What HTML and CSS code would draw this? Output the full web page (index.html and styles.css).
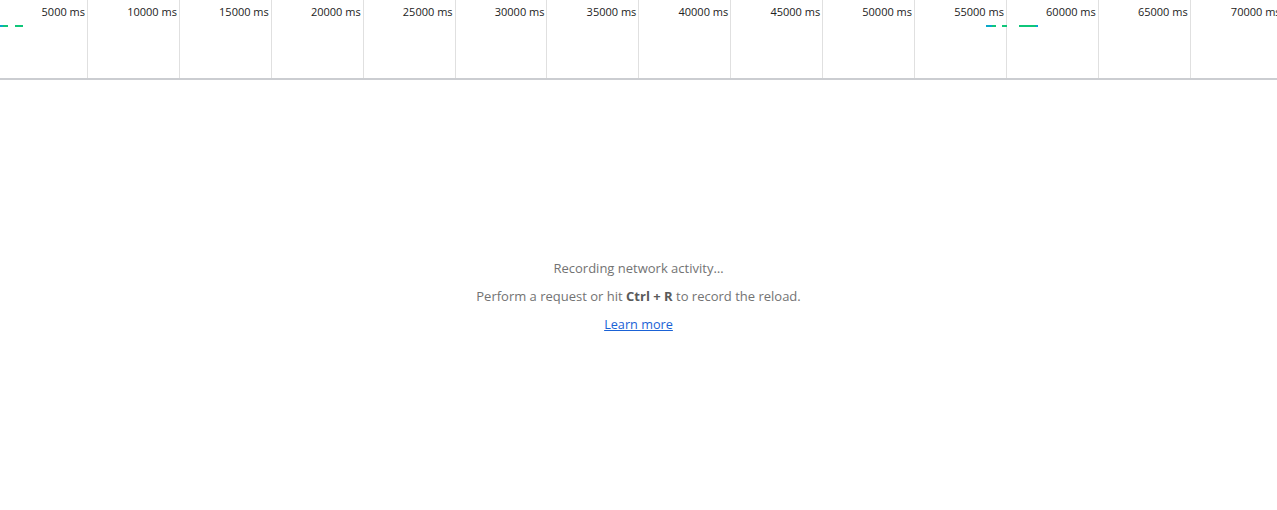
FILE: index.html
```html
<!DOCTYPE html>
<html>
<head>
<meta charset="utf-8">
<link rel="stylesheet" href="styles.css">
</head>
<body>
<div class="overview">
  <div class="ticks">
    <div class="tick"><span>5000 ms</span></div>
    <div class="tick"><span>10000 ms</span></div>
    <div class="tick"><span>15000 ms</span></div>
    <div class="tick"><span>20000 ms</span></div>
    <div class="tick"><span>25000 ms</span></div>
    <div class="tick"><span>30000 ms</span></div>
    <div class="tick"><span>35000 ms</span></div>
    <div class="tick"><span>40000 ms</span></div>
    <div class="tick"><span>45000 ms</span></div>
    <div class="tick"><span>50000 ms</span></div>
    <div class="tick"><span>55000 ms</span></div>
    <div class="tick"><span>60000 ms</span></div>
    <div class="tick"><span>65000 ms</span></div>
    <div class="tick"><span>70000 ms</span></div>
  </div>
  <div class="bar" style="left:0;width:8px"><i style="width:3px"></i></div>
  <div class="bar" style="left:15px;width:8px"></div>
  <div class="bar" style="left:986px;width:10px"><i style="width:6px"></i></div>
  <div class="bar" style="left:1002px;width:5px"></div>
  <div class="bar" style="left:1019px;width:19px"><b style="width:2px"></b></div>
</div>
<div class="empty">
  <div class="msg">Recording network activity…</div>
  <div class="msg">Perform a request or hit <strong>Ctrl + R</strong> to record the reload.</div>
  <a class="link" href="#">Learn more</a>
</div>
</body>
</html>
```
FILE: styles.css
```css
html, body { margin: 0; padding: 0; background: #fff; }
body { width: 1277px; height: 510px; overflow: hidden; font-family: "Open Sans", "Noto Sans", sans-serif; }
.overview { position: relative; height: 78px; border-bottom: 2px solid #cbcdd1; overflow: hidden; }
.ticks { display: flex; height: 78px; margin-left: -3.9px; }
.tick { flex: 0 0 91.9px; box-sizing: border-box; border-right: 1px solid #e0e0e0; text-align: right; padding: 4px 2px 0 0; font-size: 11px; color: #222; white-space: nowrap; letter-spacing: 0; }
.tick:last-child { border-right: none; }
.bar { position: absolute; top: 25px; height: 2px; background: #0fc67a; display: flex; justify-content: space-between; }
.bar i { display: block; height: 2px; background: #0aa8c8; }
.bar b { display: block; height: 2px; background: #0a9fd8; margin-left: auto; }
.empty { display: flex; flex-direction: column; align-items: center; padding-top: 178px; font-size: 13px; color: #737373; }
.msg { height: 28px; line-height: 21px; }
.msg strong { color: #5a5a5a; font-weight: 700; }
.link { color: #1a62d6; text-decoration: underline; line-height: 21px; font-size: 12.7px; }
```
